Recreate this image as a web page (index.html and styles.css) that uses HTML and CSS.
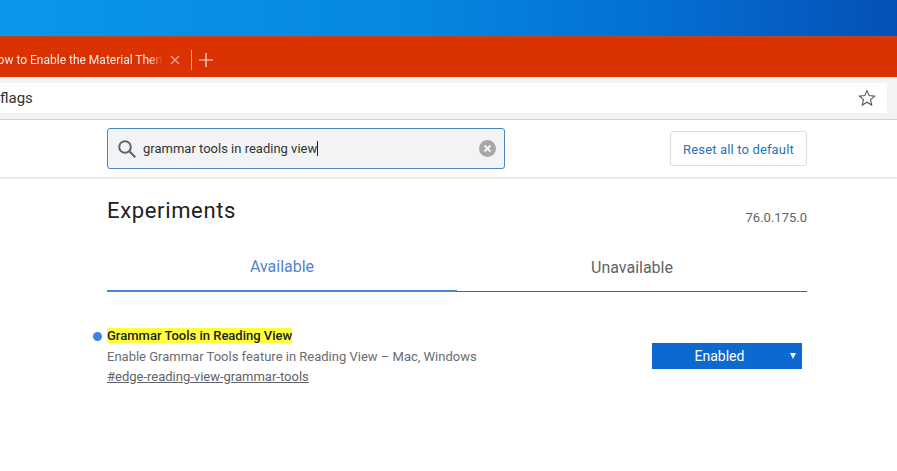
FILE: index.html
```html
<!DOCTYPE html>
<html>
<head>
    <meta charset="utf-8">
    <title>Experiments</title>
    <link rel="stylesheet" href="styles.css">
</head>
<body>
    <div class="desktop"></div>

    <div class="tabstrip">
        <div class="tab">
            <span class="tab-title">How to Enable the Material Theme</span>
            <svg class="tab-close" width="10" height="10" viewBox="0 0 10 10"><path d="M1 1l8 8M9 1l-8 8"/></svg>
        </div>
        <div class="tab-sep"></div>
        <svg class="tab-new" width="14" height="14" viewBox="0 0 14 14"><path d="M7 0v14M0 7h14"/></svg>
    </div>

    <div class="toolbar">
        <div class="omnibox">
            <span class="url">flags</span>
            <svg class="star" width="18" height="18" viewBox="0 0 18 18"><path d="M9 1.600l2.200 5 5.400.5-4.100 3.600 1.200 5.300L9 13.200 4.300 16l1.200-5.300-4.100-3.600 5.400-.5z"/></svg>
        </div>
    </div>

    <header class="flags-header">
        <div class="search-box">
            <svg class="search-icon" width="20" height="20" viewBox="0 0 20 20"><circle cx="8" cy="8" r="5.800"/><path d="M12.300 12.300l6 6"/></svg>
            <span class="search-text">grammar tools in reading view</span>
            <span class="caret"></span>
            <svg class="search-clear" width="17" height="17" viewBox="0 0 17 17"><circle cx="8.500" cy="8.500" r="8.500"/><path d="M5.500 5.500l6 6M11.500 5.500l-6 6"/></svg>
        </div>
        <button class="reset">Reset all to default</button>
    </header>

    <main class="content">
        <div class="title-row">
            <h1>Experiments</h1>
            <span class="version">76.0.175.0</span>
        </div>

        <div class="tabs">
            <div class="tabs-item active">Available</div>
            <div class="tabs-item">Unavailable</div>
        </div>

        <div class="experiment">
            <div class="experiment-text">
                <h2><span class="dot"></span><mark>Grammar Tools in Reading View</mark></h2>
                <p>Enable Grammar Tools feature in Reading View – Mac, Windows</p>
                <a href="#edge-reading-view-grammar-tools">#edge-reading-view-grammar-tools</a>
            </div>
            <div class="select">
                <span>Enabled</span>
                <span class="arrow"></span>
            </div>
        </div>
    </main>
</body>
</html>
```

FILE: styles.css
```css
body {
    margin: 0;
    background: #fff;
    font-family: Roboto, 'Liberation Sans', sans-serif;
    overflow: hidden;
}

.desktop {
    height: 36px;
    background: linear-gradient(90deg, #0a97ea 0%, #0688e0 45%, #0470d4 72%, #0650b5 100%);
    border-bottom: 1px solid #b8481f;
}

.tabstrip {
    height: 34px;
    padding-top: 6px;
    background: #da3200;
    display: flex;
    align-items: center;
}

.tab {
    width: 191px;
    display: flex;
    justify-content: flex-end;
    align-items: center;
    overflow: hidden;
    flex: none;
}

.tab-title {
    flex: none;
    width: 174px;
    margin-right: 7px;
    overflow: hidden;
    white-space: nowrap;
    color: #fde9e2;
    font-size: 12px;
    -webkit-mask-image: linear-gradient(90deg, #000 92%, transparent 100%);
    mask-image: linear-gradient(90deg, #000 92%, transparent 100%);
}

.tab-close {
    flex: none;
    margin-right: 11px;
}

.tab-close path {
    stroke: #f3a48d;
    stroke-width: 1.300;
    fill: none;
}

.tab-sep {
    width: 1px;
    height: 20px;
    background: #f0a58e;
}

.tab-new {
    margin-left: 7px;
}

.tab-new path {
    stroke: #fbe4dc;
    stroke-width: 1.200;
    fill: none;
}

.toolbar {
    height: 36px;
    padding-top: 6px;
    background: #f3f3f3;
    border-bottom: 1px solid #d4d4d4;
}

.omnibox {
    width: 887px;
    height: 30px;
    background: #fff;
    border-radius: 0 3px 3px 0;
    display: flex;
    align-items: center;
    justify-content: space-between;
}

.url {
    font-size: 15px;
    color: #333;
}

.star {
    margin-right: 11px;
}

.star path {
    fill: none;
    stroke: #555;
    stroke-width: 1.100;
}

.flags-header {
    height: 57px;
    padding: 0 90px 0 107px;
    display: flex;
    align-items: center;
    justify-content: space-between;
    box-shadow: 0 1px 2px rgba(0, 0, 0, 0.18);
}

.search-box {
    box-sizing: border-box;
    width: 398px;
    height: 41px;
    background: #f1f3f4;
    border: 1px solid #4a87c0;
    border-radius: 3px;
    display: flex;
    align-items: center;
    padding: 0 8px 0 9px;
}

.search-icon {
    flex: none;
    margin-right: 6px;
}

.search-icon circle,
.search-icon path {
    fill: none;
    stroke: #5f6368;
    stroke-width: 2;
}

.search-text {
    font-size: 13px;
    color: #333;
}

.caret {
    width: 1px;
    height: 15px;
    background: #222;
}

.search-clear {
    margin-left: auto;
}

.search-clear circle {
    fill: #a8a8a8;
}

.search-clear path {
    stroke: #f1f3f4;
    stroke-width: 2;
    fill: none;
}

.reset {
    width: 137px;
    height: 35px;
    padding: 1px 0 0;
    background: #fff;
    border: 1px solid #dadce0;
    border-radius: 3px;
    color: #1f75b8;
    font-family: inherit;
    font-size: 13px;
    letter-spacing: 0.150px;
}

.content {
    padding: 0 90px 0 107px;
}

.title-row {
    display: flex;
    justify-content: space-between;
    align-items: flex-end;
    height: 53px;
}

h1 {
    margin: 0 0 6px;
    font-size: 22px;
    font-weight: 400;
    color: #202124;
    line-height: 26px;
    letter-spacing: 0.650px;
}

.version {
    font-size: 13px;
    color: #5f6368;
    line-height: 17px;
    margin-bottom: 4px;
}

.tabs {
    display: flex;
    margin-top: 18px;
    height: 44px;
}

.tabs-item {
    flex: 1;
    padding-top: 7px;
    text-align: center;
    font-size: 16px;
    color: #5f6368;
    line-height: 26px;
    border-bottom: 1px solid #5f6368;
}

.tabs-item.active {
    padding-top: 6px;
    color: #4f86cb;
    border-bottom: 2px solid #4a86e0;
}

.experiment {
    display: flex;
    justify-content: space-between;
    align-items: center;
    margin-top: 35px;
}

h2 {
    margin: 0;
    font-size: 13px;
    font-weight: 500;
    color: #202124;
    line-height: 17px;
    position: relative;
}

mark {
    background: #ffff3c;
    color: inherit;
}

.dot {
    position: absolute;
    left: -14px;
    top: 5px;
    width: 9px;
    height: 9px;
    border-radius: 50%;
    background: #3b82e6;
}

.experiment-text p {
    margin: 4px 0 0;
    font-size: 13px;
    color: #6a6d71;
    line-height: 17px;
}

.experiment-text a {
    display: block;
    margin-top: 3px;
    font-size: 13px;
    color: #5f6368;
    line-height: 17px;
}

.select {
    box-sizing: border-box;
    width: 150px;
    height: 26px;
    margin-right: 5px;
    padding-right: 15px;
    background: #0b69cf;
    color: #fff;
    font-size: 14px;
    display: flex;
    align-items: center;
    justify-content: center;
    position: relative;
}

.arrow {
    position: absolute;
    right: 6px;
    top: 10px;
    border-left: 3px solid transparent;
    border-right: 3px solid transparent;
    border-top: 6px solid #fff;
}
```
